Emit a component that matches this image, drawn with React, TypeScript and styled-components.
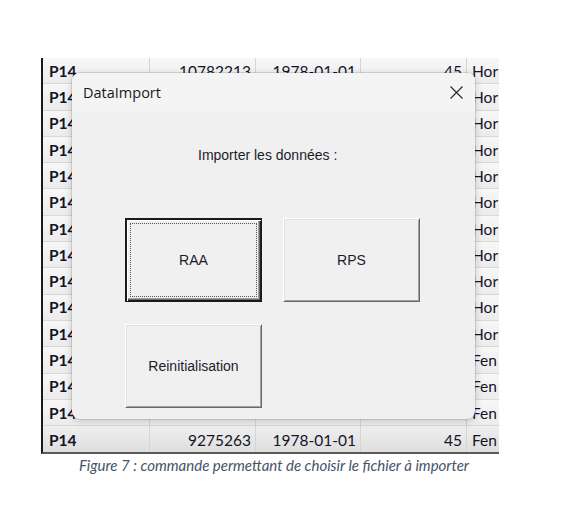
import styled, { createGlobalStyle } from 'styled-components'

const GlobalStyle = createGlobalStyle`
  html, body {
    margin: 0;
    padding: 0;
    background: #ffffff;
  }
  body {
    width: 571px;
    height: 511px;
    overflow: hidden;
  }
`

const Page = styled.div`
  position: relative;
  width: 571px;
  height: 511px;
  padding-top: 58px;
  box-sizing: border-box;
`

const Sheet = styled.div`
  margin-left: 41px;
  width: 458px;
  border-left: 2px solid #1a1a1a;
  border-bottom: 2px solid #5a5a5a;
  box-sizing: border-box;
  font-family: Lato, 'Liberation Sans', sans-serif;
  font-size: 15.5px;
  color: #141428;
`

const Row = styled.div<{ $last?: boolean }>`
  display: grid;
  grid-template-columns: 107px 106px 105px 106px 32px;
  height: 26.3px;
  background: ${(p) =>
    p.$last
      ? 'linear-gradient(#efefef, #dedede)'
      : 'linear-gradient(#f7f7f7, #ececec)'};
  border-bottom: ${(p) => (p.$last ? 'none' : '1px solid #d8d8d8')};
  box-sizing: border-box;
`

const Cell = styled.div<{ $align?: 'left' | 'right'; $bold?: boolean }>`
  display: flex;
  align-items: flex-end;
  justify-content: ${(p) => (p.$align === 'right' ? 'flex-end' : 'flex-start')};
  padding: 0 ${(p) => (p.$align === 'right' ? '4px' : '0')} 4px
    ${(p) => (p.$align === 'right' ? '0' : '6px')};
  border-right: 1px solid #d4d4d4;
  font-weight: ${(p) => (p.$bold ? 700 : 400)};
  white-space: nowrap;
  overflow: hidden;
  line-height: 1;

  &:last-child {
    border-right: none;
    padding-left: 5px;
  }
`

const Caption = styled.p`
  margin: 2px 0 0 41px;
  padding-left: 8px;
  width: 458px;
  box-sizing: border-box;
  text-align: center;
  white-space: nowrap;
  font-family: Lato, 'Liberation Sans', sans-serif;
  font-style: italic;
  font-size: 15px;
  line-height: 18px;
  color: #44546a;
`

const Dialog = styled.div`
  position: absolute;
  left: 72px;
  top: 73px;
  width: 403px;
  height: 346px;
  border-radius: 8px;
  background: #f0f0f0;
  box-shadow: 0 0 0 1px rgba(0, 0, 0, 0.1), 0 2px 8px rgba(0, 0, 0, 0.18);
  overflow: hidden;
  display: flex;
  flex-direction: column;
`

const TitleBar = styled.div`
  height: 39px;
  flex: none;
  display: flex;
  align-items: center;
  justify-content: space-between;
  padding: 0 12px 0 11px;
  background: #f4f4f4;
  font-family: 'Open Sans', 'Noto Sans', sans-serif;
  font-size: 14.5px;
  color: #1a1a1a;
`

const CloseButton = styled.span`
  display: flex;
  width: 13px;
  height: 13px;
`

const Body = styled.div`
  flex: 1;
  padding: 35px 0 0 53px;
  font-family: 'Liberation Sans', Arial, sans-serif;
  font-size: 14px;
  color: #1c1c2c;
`

const Label = styled.div`
  padding-left: 73px;
  line-height: 16px;
`

const ButtonGrid = styled.div`
  display: grid;
  grid-template-columns: repeat(2, 137px);
  grid-auto-rows: 84px;
  column-gap: 21px;
  row-gap: 22px;
  margin-top: 55px;
`

const Button = styled.button<{ $focused?: boolean }>`
  position: relative;
  margin: 0;
  padding: 0;
  background: #f0f0f0;
  font: inherit;
  color: inherit;
  box-sizing: border-box;
  border: 1px solid;
  border-color: ${(p) => (p.$focused ? '#1a1a1a' : '#ffffff #696969 #696969 #ffffff')};
  box-shadow: ${(p) =>
    p.$focused
      ? 'inset 1px 1px #1a1a1a, inset 2px 2px #ffffff, inset -1px -1px #1a1a1a, inset -2px -2px #696969, inset -3px -3px #a0a0a0'
      : 'inset 1px 1px #e3e3e3, inset -1px -1px #a0a0a0'};

  &::after {
    content: '';
    display: ${(p) => (p.$focused ? 'block' : 'none')};
    position: absolute;
    inset: 4px;
    border: 1px dotted #555;
  }
`

type RowData = [string, string, string, string, string]

const rows: RowData[] = [
  ['P14', '10782213', '1978-01-01', '45', 'Hor'],
  ['P14', '10782214', '1978-01-01', '45', 'Hor'],
  ['P14', '10782215', '1978-01-01', '45', 'Hor'],
  ['P14', '10782216', '1978-01-01', '45', 'Hor'],
  ['P14', '10782217', '1978-01-01', '45', 'Hor'],
  ['P14', '10782218', '1978-01-01', '45', 'Hor'],
  ['P14', '10782219', '1978-01-01', '45', 'Hor'],
  ['P14', '10782220', '1978-01-01', '45', 'Hor'],
  ['P14', '10782221', '1978-01-01', '45', 'Hor'],
  ['P14', '10782222', '1978-01-01', '45', 'Hor'],
  ['P14', '10782223', '1978-01-01', '45', 'Hor'],
  ['P14', '9275260', '1978-01-01', '45', 'Fen'],
  ['P14', '9275261', '1978-01-01', '45', 'Fen'],
  ['P14', '9275262', '1978-01-01', '45', 'Fen'],
  ['P14', '9275263', '1978-01-01', '45', 'Fen'],
]

const CloseIcon = () => (
  <svg width="13" height="13" viewBox="0 0 13 13">
    <path d="M0.5 0.5 L12.5 12.5 M12.5 0.5 L0.5 12.5" stroke="#2b2b2b" strokeWidth="1.2" fill="none" />
  </svg>
)

export default function App() {
  return (
    <>
      <GlobalStyle />
      <Page>
        <Sheet>
          {rows.map((r, i) => (
            <Row key={i} $last={i === rows.length - 1}>
              <Cell $bold>{r[0]}</Cell>
              <Cell $align="right">{r[1]}</Cell>
              <Cell $align="right">{r[2]}</Cell>
              <Cell $align="right">{r[3]}</Cell>
              <Cell>{r[4]}</Cell>
            </Row>
          ))}
        </Sheet>
        <Caption>Figure 7 : commande permettant de choisir le fichier à importer</Caption>

        <Dialog>
          <TitleBar>
            <span>DataImport</span>
            <CloseButton>
              <CloseIcon />
            </CloseButton>
          </TitleBar>
          <Body>
            <Label>Importer les données :</Label>
            <ButtonGrid>
              <Button $focused>RAA</Button>
              <Button>RPS</Button>
              <Button>Reinitialisation</Button>
            </ButtonGrid>
          </Body>
        </Dialog>
      </Page>
    </>
  )
}
